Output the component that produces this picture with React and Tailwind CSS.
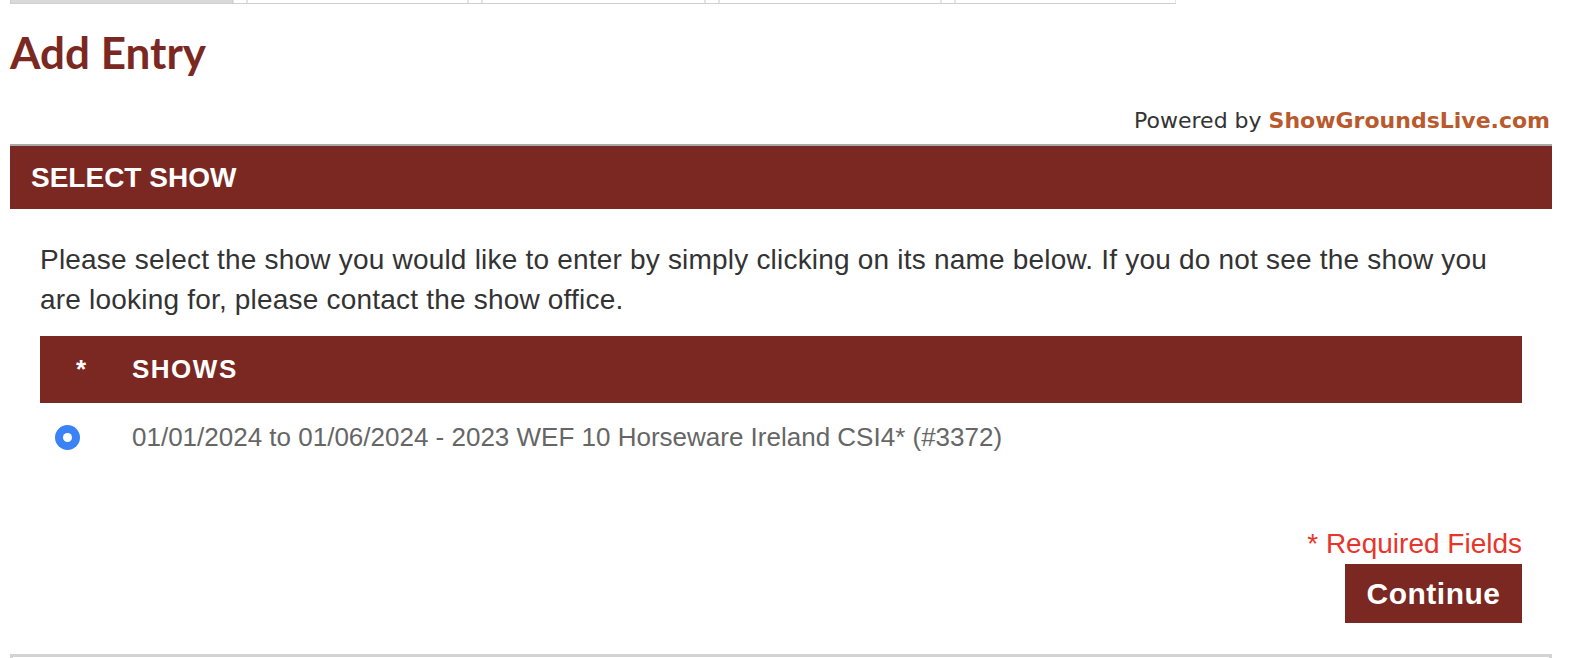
export default function App() {
  const tabs = [
    { w: 223, active: true },
    { w: 221 },
    { w: 223 },
    { w: 222 },
    { w: 221 },
  ];
  return (
    <div className="w-[1570px] h-[658px] overflow-hidden bg-white">
      <div className="pl-[10px] pr-[18px]">
        {/* top tab strip */}
        <div className="flex w-[1166px] h-[4px] border-b border-[#cfcfcf]">
          {tabs.map((t, i) => (
            <div key={i} className="flex">
              {i > 0 && <div className="w-[14px] border-x border-[#e4e4e4]" />}
              <div
                className={
                  t.active
                    ? "bg-[#d9d9d9] border-x border-[#cfcfcf]"
                    : "bg-white border-x border-[#e4e4e4]"
                }
                style={{ width: t.w }}
              />
            </div>
          ))}
        </div>

        <h1 className="mt-[22px] text-[44px] leading-[53px] font-bold text-[#7b2822] font-['Lato',sans-serif]">
          Add Entry
        </h1>

        <div className="mt-[29px] text-right pr-[2px] text-[22px] leading-[26px] text-[#333] font-['DejaVu_Sans',sans-serif]">
          Powered by{" "}
          <span className="font-bold text-[#b85a2e]">ShowGroundsLive.com</span>
        </div>

        <div className="mt-[10px] border-t-2 border-[#a9a9a9]">
          <div className="h-[63px] bg-[#7b2822] flex items-center px-[21px]">
            <span className="text-white font-bold text-[28px] font-['Liberation_Sans',Arial,sans-serif]">
              SELECT SHOW
            </span>
          </div>

          <div className="px-[30px] font-['Liberation_Sans',Arial,sans-serif]">
            <p className="mt-[31px] text-[28px] leading-[40px] tracking-[0.2px] text-[#333]">
              Please select the show you would like to enter by simply clicking on its name below. If you do not see the show you are looking for, please contact the show office.
            </p>

            <div className="mt-[16px]">
              <div className="h-[67px] bg-[#7b2822] flex items-center text-white font-bold text-[26px] tracking-[1.5px]">
                <div className="w-[92px] pl-[36px]">*</div>
                <div>SHOWS</div>
              </div>
              <div className="h-[68px] flex items-center">
                <div className="w-[92px] pl-[15px] flex items-center">
                  <span className="w-[25px] h-[25px] rounded-full bg-[#3b82f6] flex items-center justify-center">
                    <span className="w-[9px] h-[9px] rounded-full bg-white" />
                  </span>
                </div>
                <div className="text-[26px] text-[#666]">
                  01/01/2024 to 01/06/2024 - 2023 WEF 10 Horseware Ireland CSI4* (#3372)
                </div>
              </div>
            </div>

            <div className="mt-[58px] flex flex-col items-end">
              <div className="text-[28px] leading-[30px] text-[#e8352b]">* Required Fields</div>
              <button className="mt-[5px] w-[177px] h-[59px] bg-[#7b2822] text-white font-bold text-[30px] tracking-[0.5px]">
                Continue
              </button>
            </div>
          </div>
        </div>

        <div className="mt-[31px] h-[10px] border-t-[3px] border-x-[3px] border-[#d4d4d4]" />
      </div>
    </div>
  );
}
